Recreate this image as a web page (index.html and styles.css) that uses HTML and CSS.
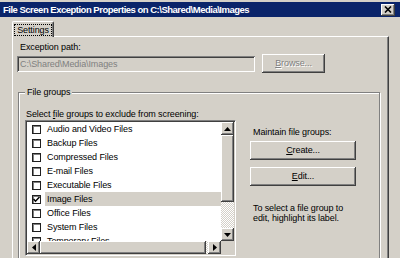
FILE: index.html
```html
<!DOCTYPE html>
<html>
<head>
	<title>File Screen Exception Properties</title>
	<link rel="stylesheet" href="styles.css">
</head>
<body>
	<div class="titlebar">
		<span class="title">File Screen Exception Properties on C:\Shared\Media\Images</span>
		<span class="close"><svg width="8" height="7" viewBox="0 0 8 7"><path d="M1 0.5 L7 6.5 M7 0.5 L1 6.5" stroke="#000" stroke-width="1.6"/></svg></span>
	</div>
	<div class="tabs">
		<div class="tab"><span class="focus">Settings</span></div>
	</div>
	<div class="panel">
		<div class="label path-label">Exception path:</div>
		<div class="path-row">
			<div class="field">C:\Shared\Media\Images</div>
			<div class="button disabled"><u>B</u>rowse...</div>
		</div>
		<div class="group">
			<div class="group-title">File groups</div>
			<div class="group-body">
				<div class="list-col">
					<div class="label select-label">Select <u>f</u>ile groups to exclude from screening:</div>
					<div class="listbox">
						<div class="items">
							<div class="item"><span class="check"></span><span class="name">Audio and Video Files</span></div>
							<div class="item"><span class="check"></span><span class="name">Backup Files</span></div>
							<div class="item"><span class="check"></span><span class="name">Compressed Files</span></div>
							<div class="item"><span class="check"></span><span class="name">E-mail Files</span></div>
							<div class="item"><span class="check"></span><span class="name">Executable Files</span></div>
							<div class="item selected"><span class="check"><svg width="7" height="7" viewBox="0 0 7 7"><path d="M0.5 3 L2.5 5.2 L6.5 1" stroke="#000" stroke-width="1.5" fill="none"/></svg></span><span class="name">Image Files</span></div>
							<div class="item"><span class="check"></span><span class="name">Office Files</span></div>
							<div class="item"><span class="check"></span><span class="name">System Files</span></div>
							<div class="item"><span class="check"></span><span class="name">Temporary Files</span></div>
						</div>
						<div class="vscroll">
							<div class="sbtn"><svg width="7" height="4" viewBox="0 0 7 4"><polygon points="3.5,0 7,4 0,4" fill="#000"/></svg></div>
							<div class="vthumb"></div>
							<div class="track"></div>
							<div class="sbtn"><svg width="7" height="4" viewBox="0 0 7 4"><polygon points="0,0 7,0 3.5,4" fill="#000"/></svg></div>
						</div>
						<div class="hscroll">
							<div class="sbtn"><svg width="4" height="7" viewBox="0 0 4 7"><polygon points="4,0 4,7 0,3.5" fill="#000"/></svg></div>
							<div class="hthumb"></div>
							<div class="track"></div>
							<div class="sbtn"><svg width="4" height="7" viewBox="0 0 4 7"><polygon points="0,0 4,3.5 0,7" fill="#000"/></svg></div>
						</div>
						<div class="corner"></div>
					</div>
				</div>
				<div class="side">
					<div class="label">Maintain file groups:</div>
					<div class="button create"><u>C</u>reate...</div>
					<div class="button edit"><u>E</u>dit...</div>
					<p class="hint">To select a file group to edit, highlight its label.</p>
				</div>
			</div>
		</div>
	</div>
</body>
</html>
```
FILE: styles.css
```css
html, body {
	margin: 0;
}
body {
	width: 400px;
	height: 258px;
	overflow: hidden;
	background: #d4d0c8;
	font-family: "Liberation Sans", Arial, sans-serif;
	font-size: 9px;
	line-height: 11px;
	letter-spacing: -0.1px;
	color: #000;
	padding-top: 2px;
	box-sizing: border-box;
}
.titlebar {
	display: flex;
	align-items: center;
	height: 15px;
	padding-left: 3px;
	background: #0a246a;
	color: #fff;
	font-size: 9.5px;
	font-weight: bold;
	letter-spacing: -0.5px;
}
.title {
	flex: 1;
	white-space: nowrap;
}
.close {
	display: flex;
	align-items: center;
	justify-content: center;
	width: 14px;
	height: 12px;
	margin-right: 5px;
	background: #d4d0c8;
	box-shadow: inset -1px -1px #404040, inset 1px 1px #fff, inset -2px -2px #808080;
}
.tabs {
	display: flex;
	padding: 4px 0 0 12px;
}
.tab {
	position: relative;
	z-index: 1;
	display: flex;
	align-items: center;
	justify-content: center;
	width: 42px;
	height: 16px;
	margin-bottom: -1px;
	border-top: 1px solid #fff;
	border-left: 1px solid #fff;
	border-right: 1px solid #404040;
	border-radius: 2px 2px 0 0;
	box-shadow: inset -1px 0 #808080;
	background: #d4d0c8;
	box-sizing: border-box;
}
.focus {
	outline: 1px dotted #000;
	outline-offset: 0;
	padding: 0 2px;
	line-height: 10px;
}
.panel {
	width: 377px;
	height: 240px;
	margin-left: 12px;
	padding: 5px 0 0 4px;
	border-top: 1px solid #fff;
	border-left: 1px solid #fff;
	border-right: 1px solid #404040;
	box-shadow: inset -1px 0 #808080;
	box-sizing: border-box;
}
.path-label {
	margin-left: 3px;
}
.path-row {
	display: flex;
	align-items: center;
	margin-top: 1px;
	height: 19px;
}
.field {
	width: 238px;
	height: 16px;
	padding-left: 3px;
	line-height: 16px;
	color: #808080;
	box-sizing: border-box;
	box-shadow: inset 1px 1px #808080, inset -1px -1px #fff, inset 2px 2px #404040, inset -2px -2px #d4d0c8;
}
.button {
	display: flex;
	align-items: center;
	justify-content: center;
	height: 19px;
	background: #d4d0c8;
	box-shadow: inset -1px -1px #404040, inset 1px 1px #fff, inset -2px -2px #808080;
}
.path-row .button {
	width: 63px;
	margin-left: 7px;
}
.disabled {
	color: #808080;
	text-shadow: 1px 1px #fff;
}
.group {
	width: 362px;
	margin: 19px 0 0 1px;
	padding: 0 6px 4px 6px;
	border: 1px solid #808080;
	box-shadow: inset 1px 1px #fff, 1px 1px #fff;
	box-sizing: border-box;
}
.group-title {
	display: inline-block;
	margin-top: -6px;
	padding: 0 2px;
	background: #d4d0c8;
	vertical-align: top;
}
.group-body {
	display: flex;
	margin-top: 5px;
}
.select-label {
	margin-left: 1px;
	white-space: nowrap;
}
.listbox {
	display: grid;
	grid-template-columns: 1fr 13px;
	grid-template-rows: 1fr 13px;
	width: 211px;
	height: 136px;
	border: 1px solid;
	border-color: #808080 #fff #fff #808080;
	box-shadow: inset 1px 1px #404040, inset -1px -1px #d4d0c8;
	padding: 1px;
	background: #fff;
	box-sizing: border-box;
}
.items {
	overflow: hidden;
}
.item {
	display: flex;
	align-items: center;
	height: 14px;
	padding-left: 5px;
	white-space: nowrap;
}
.check {
	display: flex;
	align-items: center;
	justify-content: center;
	width: 9px;
	height: 9px;
	margin-right: 4px;
	border: 1px solid #202020;
	box-shadow: inset 1px 1px #808080;
	background: #fff;
	box-sizing: border-box;
}
.name {
	flex: 1;
	padding-left: 2px;
	line-height: 14px;
}
.selected .name {
	background: #d4d0c8;
}
.vscroll {
	display: flex;
	flex-direction: column;
}
.hscroll {
	display: flex;
}
.sbtn {
	display: flex;
	align-items: center;
	justify-content: center;
	width: 13px;
	height: 13px;
	flex: none;
	background: #d4d0c8;
	box-shadow: inset -1px -1px #404040, inset 1px 1px #fff, inset -2px -2px #808080;
}
.vthumb, .hthumb {
	flex: none;
	background: #d4d0c8;
	box-shadow: inset -1px -1px #404040, inset 1px 1px #fff, inset -2px -2px #808080;
}
.vthumb {
	height: 67px;
}
.hthumb {
	width: 166px;
}
.track {
	flex: 1;
	background: repeating-conic-gradient(#fff 0 25%, #d4d0c8 0 50%) 0 0 / 2px 2px;
}
.corner {
	background: #d4d0c8;
}
.side {
	width: 106px;
	margin-left: 14px;
	padding-top: 18px;
}
.side .label {
	margin-left: 3px;
}
.create {
	margin-top: 3px;
}
.edit {
	margin-top: 7px;
}
.hint {
	margin: 17px 0 0 3px;
	line-height: 10px;
}
```
